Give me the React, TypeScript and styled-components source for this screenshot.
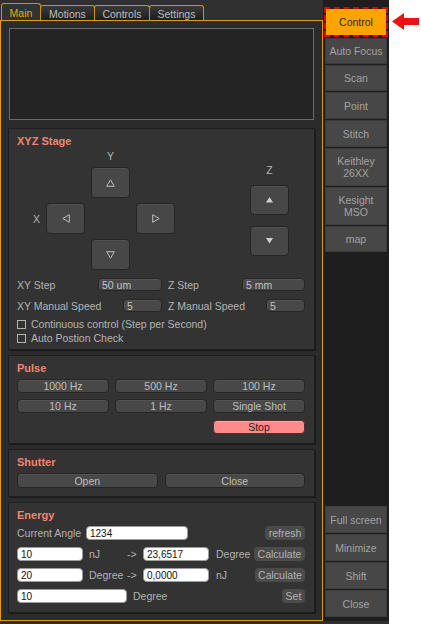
import React from "react";
import styled, { createGlobalStyle } from "styled-components";

const Global = createGlobalStyle`
  html, body { margin: 0; padding: 0; background: #ffffff; }
  body { font-family: "Liberation Sans", Arial, sans-serif; }
  * { box-sizing: border-box; }
`;

const FONT = `"Liberation Sans", Arial, sans-serif`;

const Frame = styled.div`
  width: 421px;
  height: 624px;
  display: flex;
  background: #ffffff;
  overflow: hidden;
`;

const Window = styled.div`
  width: 389px;
  height: 624px;
  background: #303030;
  display: flex;
  flex-direction: column;
`;

const WindowBody = styled.div`
  display: flex;
  height: 621px;
`;

const LeftPane = styled.div`
  width: 323px;
  display: flex;
  flex-direction: column;
  padding-top: 3px;
`;

const TabBar = styled.div`
  display: flex;
  align-items: flex-end;
  height: 17px;
  padding-left: 1px;
`;

const Tab = styled.div<{ $active?: boolean; $w: number }>`
  width: ${(p) => p.$w}px;
  height: ${(p) => (p.$active ? 17 : 15)}px;
  margin-left: -1px;
  &:first-child { margin-left: 0; }
  border: 1px solid #d28e0e;
  border-bottom: none;
  border-radius: 3px 3px 0 0;
  background: ${(p) => (p.$active ? "#323232" : "linear-gradient(#3a3a3a, #1e1e1e)")};
  color: ${(p) => (p.$active ? "#f0a40c" : "#bdbdbd")};
  font-size: 10.5px;
  display: flex;
  align-items: center;
  justify-content: center;
  padding-top: 1px;
`;

const TabBody = styled.div`
  flex: 1;
  border: 1px solid #e39b0d;
  background: #2b2b2b;
  padding: 7px 7px 6px 7px;
  display: flex;
  flex-direction: column;
  gap: 5px;
`;

const Screen = styled.div`
  height: 92px;
  margin: 0 1px 3px 1px;
  border: 1px solid #6b6b6b;
  background: #242424;
`;

const Panel = styled.section<{ $pb: number }>`
  background: #333333;
  border: 1px solid #1e1e1e;
  box-shadow: 1px 1px 0 #1a1a1a;
  padding: 6px 9px ${(p) => p.$pb}px 8px;
  display: flex;
  flex-direction: column;
`;

const Title = styled.div`
  font-size: 11px;
  font-weight: bold;
  line-height: 13px;
  height: 13px;
  color: #f3846f;
`;

const StageArea = styled.div`
  display: flex;
  margin-top: 2px;
`;

const DPad = styled.div`
  display: grid;
  grid-template-columns: 23px 39px 39px 39px;
  grid-template-rows: 12px 31px 31px 31px;
  column-gap: 6px;
  row-gap: 5px;
`;

const AxisLabel = styled.div<{ $col: number; $row: number; $align?: string }>`
  grid-column: ${(p) => p.$col};
  grid-row: ${(p) => p.$row};
  justify-self: ${(p) => p.$align || "center"};
  align-self: center;
  font-size: 10.5px;
  line-height: 12px;
  color: #b4b4b4;
`;

const PadButton = styled.button<{ $col?: number; $row?: number; $h?: number }>`
  ${(p) => (p.$col ? `grid-column: ${p.$col};` : "")}
  ${(p) => (p.$row ? `grid-row: ${p.$row};` : "")}
  width: 39px;
  height: ${(p) => p.$h || 31}px;
  padding: 0;
  margin: 0;
  background: #474747;
  border: 1px solid #252525;
  border-radius: 4px;
  box-shadow: inset 0 1px 0 #515151;
  display: flex;
  align-items: center;
  justify-content: center;
`;

const ZColumn = styled.div`
  margin-left: auto;
  margin-right: 16px;
  width: 39px;
  padding-top: 14px;
  display: flex;
  flex-direction: column;
  align-items: center;
`;

const ZLabel = styled.div`
  font-size: 10.5px;
  line-height: 12px;
  color: #b4b4b4;
  margin-bottom: 9px;
`;

const ZGap = styled.div`
  height: 11px;
`;

const FieldGrid = styled.div`
  display: grid;
  grid-template-columns: 145px 137px;
  column-gap: 6px;
  row-gap: 8px;
  margin-top: 8px;
`;

const Field = styled.div`
  display: flex;
  align-items: center;
  height: 13px;
`;

const FieldLabel = styled.span`
  font-size: 10.5px;
  color: #b4b4b4;
  white-space: nowrap;
`;

const DarkInput = styled.input<{ $w: number }>`
  margin-left: auto;
  width: ${(p) => p.$w}px;
  height: 13px;
  padding: 0 0 0 3px;
  background: #484848;
  border: 1px solid #262626;
  border-radius: 4px;
  box-shadow: inset 1px 1px 0 #555555;
  color: #c2c2c2;
  font-family: ${FONT};
  font-size: 10.5px;
  outline: none;
`;

const Checks = styled.div`
  margin-top: 5px;
  display: flex;
  flex-direction: column;
`;

const CheckRow = styled.label`
  display: flex;
  align-items: center;
  height: 14px;
  font-size: 10.5px;
  color: #b4b4b4;
`;

const Box = styled.span`
  width: 9px;
  height: 9px;
  border: 1px solid #b4b4b4;
  margin-right: 5px;
`;

const ButtonGrid = styled.div<{ $cols: number; $gap: number }>`
  display: grid;
  grid-template-columns: repeat(${(p) => p.$cols}, 1fr);
  column-gap: ${(p) => p.$gap}px;
  row-gap: 6px;
  margin-top: 4px;
`;

const Btn = styled.button<{ $h?: number; $danger?: boolean; $col?: number; $mt?: number }>`
  ${(p) => (p.$col ? `grid-column: ${p.$col};` : "")}
  margin: ${(p) => p.$mt || 0}px 0 0 0;
  height: ${(p) => p.$h || 14}px;
  padding: 0;
  background: ${(p) => (p.$danger ? "#ff8a8a" : "#484848")};
  border: 1px solid ${(p) => (p.$danger ? "#5a2a2a" : "#262626")};
  border-radius: 4px;
  box-shadow: inset 0 1px 0 ${(p) => (p.$danger ? "#ffa8a8" : "#535353")};
  color: ${(p) => (p.$danger ? "#1e1e1e" : "#bebebe")};
  font-family: ${FONT};
  font-size: 10.5px;
  line-height: 12px;
`;

const EnergyRows = styled.div`
  display: flex;
  flex-direction: column;
  gap: 7px;
  margin-top: 4px;
`;

const EnergyRow = styled.div`
  display: flex;
  align-items: center;
  height: 14px;
`;

const Unit = styled.span<{ $w?: number; $pl?: number }>`
  ${(p) => (p.$w ? `width: ${p.$w}px;` : "")}
  padding-left: ${(p) => p.$pl || 0}px;
  font-size: 10.5px;
  color: #b2b2b2;
  white-space: nowrap;
`;

const WhiteInput = styled.input<{ $w: number }>`
  width: ${(p) => p.$w}px;
  height: 14px;
  padding: 0 0 0 3px;
  background: #ffffff;
  border: 1px solid #9c9c9c;
  border-radius: 4px;
  color: #111111;
  font-family: ${FONT};
  font-size: 10px;
  outline: none;
`;

const SmallBtn = styled.button<{ $w: number }>`
  margin-left: auto;
  width: ${(p) => p.$w}px;
  height: 14px;
  padding: 0;
  background: #4b4b4b;
  border: none;
  border-radius: 4px;
  color: #b2b2b2;
  font-family: ${FONT};
  font-size: 10.5px;
`;

const Sidebar = styled.div`
  width: 66px;
  background: #1e1e1e;
  padding: 7px 2px 4px 2px;
  display: flex;
  flex-direction: column;
  justify-content: space-between;
`;

const SideGroup = styled.div`
  display: flex;
  flex-direction: column;
  gap: 1px;
`;

const SideButton = styled.div<{ $h: number; $active?: boolean }>`
  height: ${(p) => p.$h}px;
  background: ${(p) => (p.$active ? "#ffa300" : "#474747")};
  background-clip: padding-box;
  border: ${(p) => (p.$active ? "2px dashed #e10000" : "1px solid #3c3c3c")};
  margin: ${(p) => (p.$active ? "0 -1px" : "0")};
  color: ${(p) => (p.$active ? "#2a2a2a" : "#a3a3a3")};
  font-size: 10.5px;
  line-height: 12px;
  text-align: center;
  display: flex;
  align-items: center;
  justify-content: center;
`;

const BottomStrip = styled.div`
  flex: 1;
  background: #2e2e2e;
`;

const Annotation = styled.div`
  width: 32px;
  padding-top: 13px;
  display: flex;
  justify-content: flex-start;
`;

type Dir = "up" | "down" | "left" | "right";

const Tri = ({ dir, filled }: { dir: Dir; filled?: boolean }) => {
  if (filled) {
    const d = dir === "up" ? "M3.5 0 L7 5.5 L0 5.5 Z" : "M0 0 L7 0 L3.5 5.5 Z";
    return (
      <svg width="7" height="6" viewBox="0 0 7 6">
        <path d={d} fill="#cfcfcf" />
      </svg>
    );
  }
  const paths: Record<Dir, string> = {
    up: "M4.5 0.8 L8.3 7.3 L0.7 7.3 Z",
    down: "M0.7 0.7 L8.3 0.7 L4.5 7.2 Z",
    left: "M0.8 4.5 L7.3 0.7 L7.3 8.3 Z",
    right: "M0.7 0.7 L7.2 4.5 L0.7 8.3 Z",
  };
  const horiz = dir === "left" || dir === "right";
  return (
    <svg width={horiz ? 8 : 9} height={horiz ? 9 : 8} viewBox={horiz ? "0 0 8 9" : "0 0 9 8"}>
      <path d={paths[dir]} fill="none" stroke="#bdbdbd" strokeWidth="1" />
    </svg>
  );
};

const topButtons: { label: React.ReactNode; h: number; active?: boolean }[] = [
  { label: "Control", h: 30, active: true },
  { label: "Auto Focus", h: 26 },
  { label: "Scan", h: 26 },
  { label: "Point", h: 27 },
  { label: "Stitch", h: 27 },
  { label: <>Keithley<br />26XX</>, h: 38 },
  { label: <>Kesight<br />MSO</>, h: 38 },
  { label: "map", h: 26 },
];

const bottomButtons = ["Full screen", "Minimize", "Shift", "Close"];

export default function App() {
  return (
    <Frame>
      <Global />
      <Window>
        <WindowBody>
          <LeftPane>
            <TabBar>
              <Tab $active $w={40}>Main</Tab>
              <Tab $w={55}>Motions</Tab>
              <Tab $w={56}>Controls</Tab>
              <Tab $w={55}>Settings</Tab>
            </TabBar>
            <TabBody>
              <Screen />

              <Panel $pb={4}>
                <Title>XYZ Stage</Title>
                <StageArea>
                  <DPad>
                    <AxisLabel $col={3} $row={1}>Y</AxisLabel>
                    <PadButton $col={3} $row={2}><Tri dir="up" /></PadButton>
                    <AxisLabel $col={1} $row={3} $align="end">X</AxisLabel>
                    <PadButton $col={2} $row={3}><Tri dir="left" /></PadButton>
                    <PadButton $col={4} $row={3}><Tri dir="right" /></PadButton>
                    <PadButton $col={3} $row={4}><Tri dir="down" /></PadButton>
                  </DPad>
                  <ZColumn>
                    <ZLabel>Z</ZLabel>
                    <PadButton $h={30}><Tri dir="up" filled /></PadButton>
                    <ZGap />
                    <PadButton $h={30}><Tri dir="down" filled /></PadButton>
                  </ZColumn>
                </StageArea>
                <FieldGrid>
                  <Field>
                    <FieldLabel>XY Step</FieldLabel>
                    <DarkInput $w={64} readOnly value="50 um" />
                  </Field>
                  <Field>
                    <FieldLabel>Z Step</FieldLabel>
                    <DarkInput $w={63} readOnly value="5 mm" />
                  </Field>
                  <Field>
                    <FieldLabel>XY Manual Speed</FieldLabel>
                    <DarkInput $w={39} readOnly value="5" />
                  </Field>
                  <Field>
                    <FieldLabel>Z Manual Speed</FieldLabel>
                    <DarkInput $w={39} readOnly value="5" />
                  </Field>
                </FieldGrid>
                <Checks>
                  <CheckRow><Box />Continuous control (Step per Second)</CheckRow>
                  <CheckRow><Box />Auto Postion Check</CheckRow>
                </Checks>
              </Panel>

              <Panel $pb={9}>
                <Title>Pulse</Title>
                <ButtonGrid $cols={3} $gap={6}>
                  <Btn>1000 Hz</Btn>
                  <Btn>500 Hz</Btn>
                  <Btn>100 Hz</Btn>
                  <Btn>10 Hz</Btn>
                  <Btn>1 Hz</Btn>
                  <Btn>Single Shot</Btn>
                  <Btn $col={3} $danger $mt={1}>Stop</Btn>
                </ButtonGrid>
              </Panel>

              <Panel $pb={8}>
                <Title>Shutter</Title>
                <ButtonGrid $cols={2} $gap={7}>
                  <Btn $h={15}>Open</Btn>
                  <Btn $h={15}>Close</Btn>
                </ButtonGrid>
              </Panel>

              <Panel $pb={9}>
                <Title>Energy</Title>
                <EnergyRows>
                  <EnergyRow>
                    <Unit $w={69}>Current Angle</Unit>
                    <WhiteInput $w={102} readOnly value="1234" />
                    <SmallBtn $w={40}>refresh</SmallBtn>
                  </EnergyRow>
                  <EnergyRow>
                    <WhiteInput $w={66} readOnly value="10" />
                    <Unit $w={44} $pl={6}>nJ</Unit>
                    <Unit $w={16}>-&gt;</Unit>
                    <WhiteInput $w={66} readOnly value="23,6517" />
                    <Unit $pl={7}>Degree</Unit>
                    <SmallBtn $w={51}>Calculate</SmallBtn>
                  </EnergyRow>
                  <EnergyRow>
                    <WhiteInput $w={66} readOnly value="20" />
                    <Unit $w={44} $pl={6}>Degree</Unit>
                    <Unit $w={16}>-&gt;</Unit>
                    <WhiteInput $w={66} readOnly value="0,0000" />
                    <Unit $pl={7}>nJ</Unit>
                    <SmallBtn $w={50}>Calculate</SmallBtn>
                  </EnergyRow>
                  <EnergyRow>
                    <WhiteInput $w={110} readOnly value="10" />
                    <Unit $pl={6}>Degree</Unit>
                    <SmallBtn $w={23}>Set</SmallBtn>
                  </EnergyRow>
                </EnergyRows>
              </Panel>
            </TabBody>
          </LeftPane>

          <Sidebar>
            <SideGroup>
              {topButtons.map((b, i) => (
                <SideButton key={i} $h={b.h} $active={b.active}>{b.label}</SideButton>
              ))}
            </SideGroup>
            <SideGroup>
              {bottomButtons.map((b) => (
                <SideButton key={b} $h={27}>{b}</SideButton>
              ))}
            </SideGroup>
          </Sidebar>
        </WindowBody>
        <BottomStrip />
      </Window>

      <Annotation>
        <svg width="30" height="18" viewBox="0 0 30 18">
          <path d="M3 8.5 L15 0 L15 5 L30 5 L30 12 L15 12 L15 17 Z" fill="#ee1111" />
        </svg>
      </Annotation>
    </Frame>
  );
}
